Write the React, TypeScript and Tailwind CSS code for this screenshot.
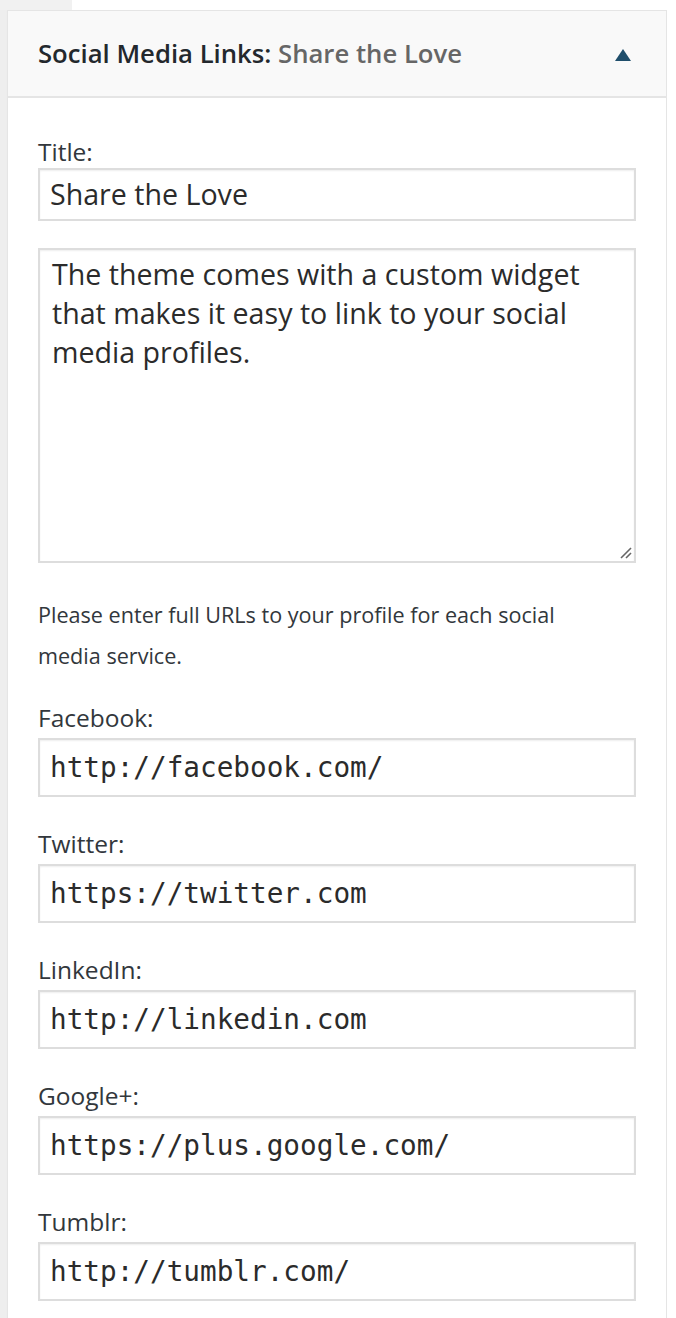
const sans = { fontFamily: '"Open Sans", "Noto Sans", sans-serif' }
const mono = { fontFamily: '"DejaVu Sans Mono", "Liberation Mono", monospace' }

interface UrlFieldProps {
  label: string
  value: string
}

function UrlField({ label, value }: UrlFieldProps) {
  return (
    <div>
      <div className="h-[30px] text-[24.5px] leading-[30px] text-[#32373c]">{label}</div>
      <div className="mt-[5px] flex h-[59px] items-center border-2 border-[#dddddd] bg-white px-[10px] shadow-[inset_0_1px_2px_rgba(0,0,0,0.07)]">
        <span className="text-[27.7px] leading-none text-[#2b2b2b]" style={mono}>
          {value}
        </span>
      </div>
    </div>
  )
}

const links = [
  { label: 'Facebook:', value: 'http://facebook.com/' },
  { label: 'Twitter:', value: 'https://twitter.com' },
  { label: 'LinkedIn:', value: 'http://linkedin.com' },
  { label: 'Google+:', value: 'https://plus.google.com/' },
  { label: 'Tumblr:', value: 'http://tumblr.com/' },
]

export default function App() {
  return (
    <div className="min-h-[1318px] w-[676px] overflow-hidden bg-white" style={sans}>
      {/* strip of the neighbouring column above the widget */}
      <div className="flex h-[10px]">
        <div className="w-[72px] bg-[#f1f1f1]" />
        <div className="flex-1 bg-white" />
      </div>

      <div className="flex">
        <div className="w-[7px] bg-[#eeeeee]" />

        <div className="w-[660px] border border-b-0 border-[#e5e5e5] bg-white shadow-[0_1px_1px_rgba(0,0,0,0.04)]">
          {/* widget header */}
          <div className="flex h-[87px] items-center justify-between border-b-2 border-[#e5e5e5] bg-[#f9f9f9] pl-[30px] pr-[35px]">
            <h3 className="text-[25.7px] font-semibold leading-none text-[#23282d]">
              Social Media Links:
              <span className="text-[#666666]"> Share the Love</span>
            </h3>
            <svg width="16" height="12" viewBox="0 0 16 12" className="mt-[2px]">
              <polygon points="8,0 16,12 0,12" fill="#1f4e6b" />
            </svg>
          </div>

          {/* widget body */}
          <div className="px-[30px] pb-[20px] pt-[39px]">
            <div className="h-[30px] text-[24.5px] leading-[30px] text-[#32373c]">Title:</div>
            <div className="mt-px flex h-[53px] items-center border-2 border-[#dddddd] bg-white px-[10px] shadow-[inset_0_1px_2px_rgba(0,0,0,0.07)]">
              <span className="text-[28.6px] leading-none text-[#2b2b2b]">Share the Love</span>
            </div>

            <div className="relative mt-[27px] h-[315px] border-2 border-[#dddddd] bg-white px-[12px] pt-[4px] shadow-[inset_0_1px_2px_rgba(0,0,0,0.07)]">
              <p className="text-[28.6px] leading-[39px] text-[#2b2b2b]">
                The theme comes with a custom widget that makes it easy to link to your social media profiles.
              </p>
              <svg width="14" height="14" viewBox="0 0 14 14" className="absolute bottom-[2px] right-[2px]">
                <line x1="13" y1="3" x2="3" y2="13" stroke="#666" strokeWidth="1.6" />
                <line x1="13" y1="8" x2="8" y2="13" stroke="#666" strokeWidth="1.6" />
              </svg>
            </div>

            <p className="mt-[31px] pr-[40px] text-[21.6px] leading-[41px] text-[#32373c]">
              Please enter full URLs to your profile for each social media service.
            </p>

            <div className="mt-[27px] flex flex-col gap-[32px]">
              {links.map((l) => (
                <UrlField key={l.label} label={l.label} value={l.value} />
              ))}
            </div>
          </div>
        </div>

        <div className="flex-1 bg-white" />
      </div>
    </div>
  )
}
